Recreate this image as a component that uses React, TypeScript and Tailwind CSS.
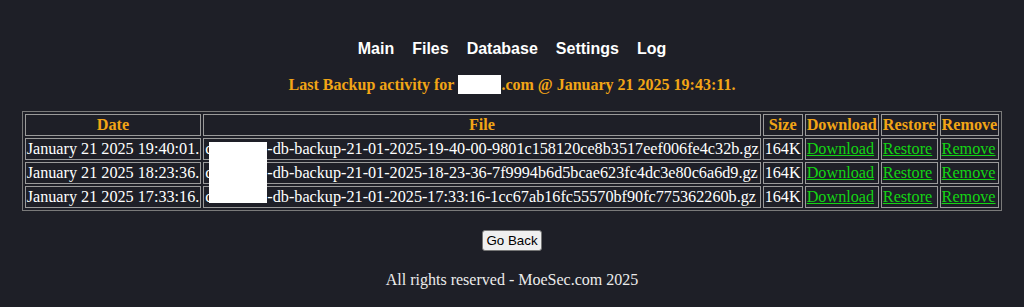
import React from "react";

const rows = [
  {
    date: "January 21 2025 19:40:01.",
    file: "-db-backup-21-01-2025-19-40-00-9801c158120ce8b3517eef006fe4c32b.gz",
  },
  {
    date: "January 21 2025 18:23:36.",
    file: "-db-backup-21-01-2025-18-23-36-7f9994b6d5bcae623fc4dc3e80c6a6d9.gz",
  },
  {
    date: "January 21 2025 17:33:16.",
    file: "-db-backup-21-01-2025-17:33:16-1cc67ab16fc55570bf90fc775362260b.gz",
  },
];

export default function App() {
  const th =
    "border border-[#9a9a9a] px-[1px] py-[1px] font-bold text-[#f2a516] text-center leading-[18px]";
  const td = "border border-[#9a9a9a] px-[1px] py-[1px] leading-[18px] whitespace-nowrap";
  const link = "text-[#14d414] underline";
  return (
    <div className="min-h-[307px] bg-[#1e1f27] flex flex-col items-center font-['Liberation_Serif',serif] text-white text-[16px]">
      <nav className="mt-[40px] flex gap-[18px] font-['Liberation_Sans',Arial,sans-serif] font-bold text-[16px] leading-[18px] text-white">
        <span>Main</span>
        <span>Files</span>
        <span>Database</span>
        <span>Settings</span>
        <span>Log</span>
      </nav>
      <p className="mt-[17px] font-bold text-[16px] leading-[19px] text-[#f2a516] flex items-center">
        Last Backup activity for&nbsp;
        <span className="inline-block w-[43px] h-[19px] bg-white" />
        .com @ January 21 2025 19:43:11.
      </p>
      <div className="relative mt-[17px]">
        <table className="border border-[#7a7a7a] border-separate border-spacing-[2px] text-[16.2px]">
          <thead>
            <tr>
              <th className={th}>Date</th>
              <th className={th}>File</th>
              <th className={th}>Size</th>
              <th className={th}>Download</th>
              <th className={th}>Restore</th>
              <th className={th}>Remove</th>
            </tr>
          </thead>
          <tbody>
            {rows.map((r) => (
              <tr key={r.date}>
                <td className={td}>{r.date}</td>
                <td className={td}>
                  <span className="inline-block w-[62px]">c</span>
                  {r.file}
                </td>
                <td className={td}>164K</td>
                <td className={td}>
                  <a className={link}>Download</a>
                </td>
                <td className={td}>
                  <a className={link}>Restore</a>
                </td>
                <td className={td}>
                  <a className={link}>Remove</a>
                </td>
              </tr>
            ))}
          </tbody>
        </table>
        <div className="absolute left-[187px] top-[31px] w-[58px] h-[61px] bg-white" />
      </div>
      <button className="mt-[19px] bg-[#efefef] text-black border border-[#767676] rounded-[3px] px-[3px] py-[2px] font-['Liberation_Sans',Arial,sans-serif] text-[13.33px] leading-[15px]">
        Go Back
      </button>
      <p className="mt-[20px] text-[#ececec] leading-[18px]">All rights reserved - MoeSec.com 2025</p>
    </div>
  );
}
